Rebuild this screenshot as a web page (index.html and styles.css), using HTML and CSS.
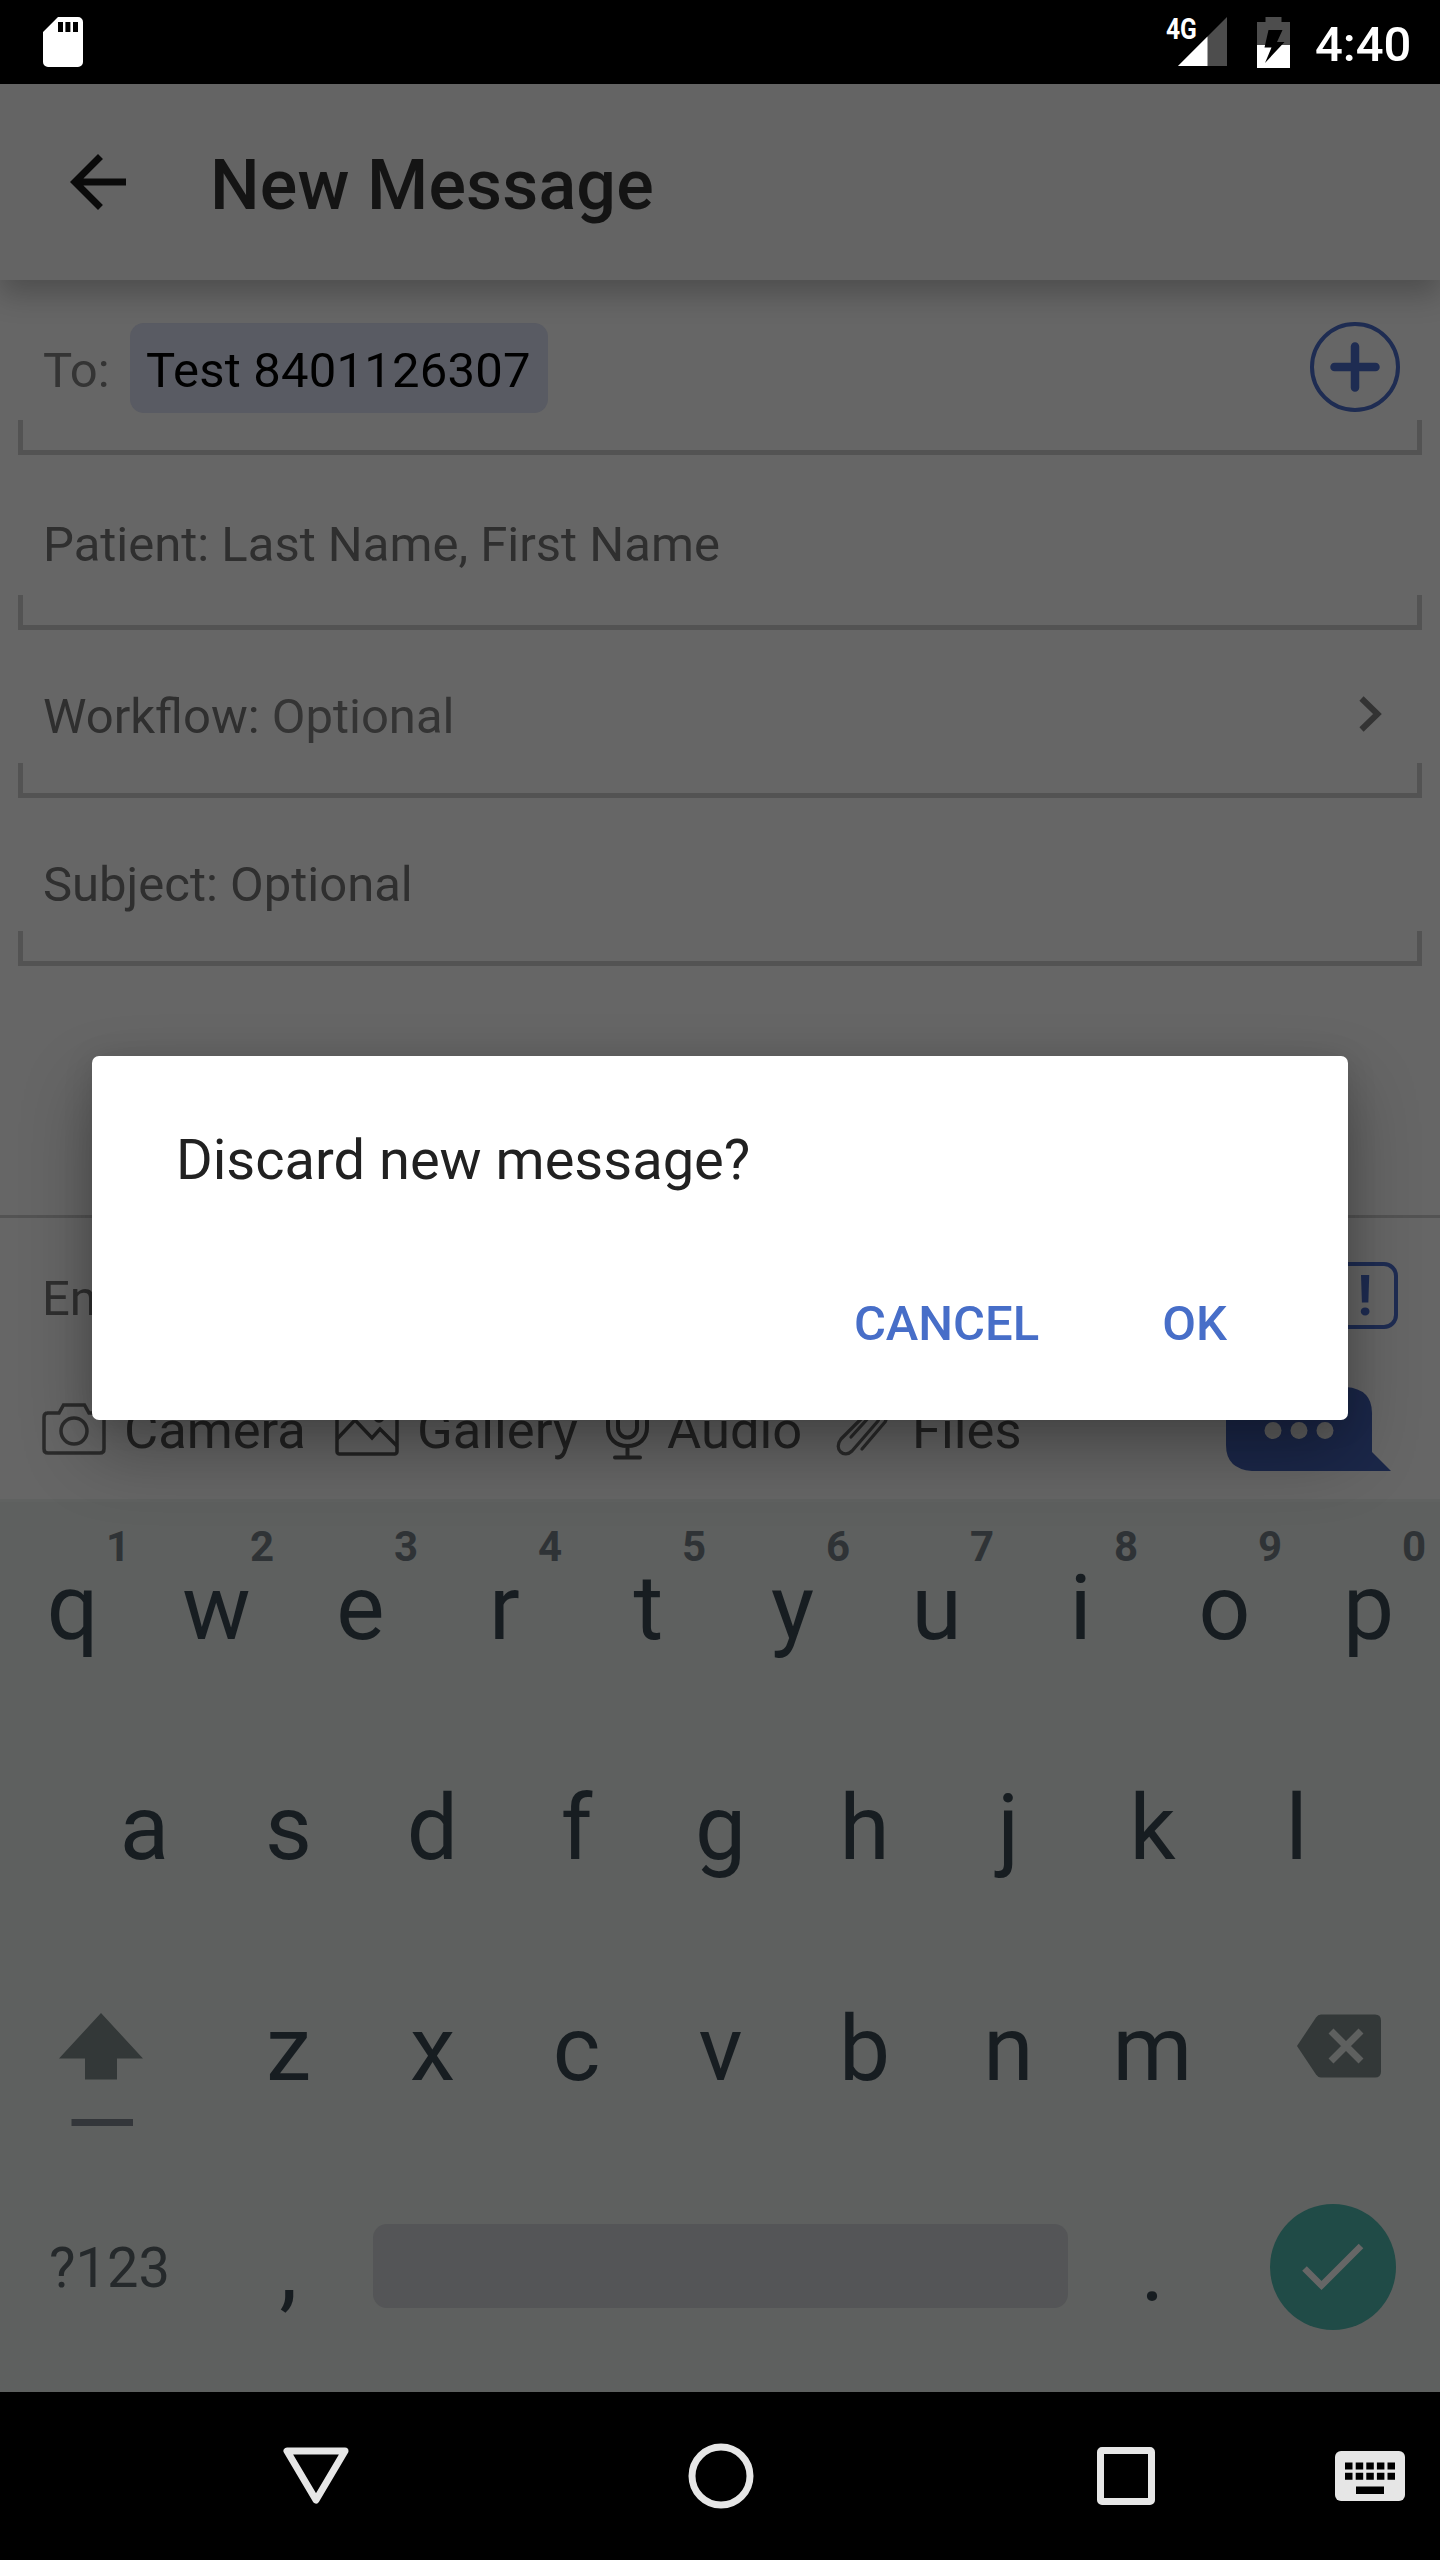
FILE: index.html
```html
<!DOCTYPE html>
<html lang="en">
<head>
<meta charset="utf-8">
<title>New Message</title>
<link rel="stylesheet" href="styles.css">
</head>
<body>
<div class="screen">
  <header class="status">
    <svg class="sd" width="40" height="50" viewBox="0 0 40 50"><path fill="#fff" fill-rule="evenodd" d="M15 0H35a5 5 0 0 1 5 5V45a5 5 0 0 1-5 5H5a5 5 0 0 1-5-5V15ZM15 5V15H20V5ZM22.400 5V15H27.400V5ZM30 5V15H35V5Z"/></svg>
    <div class="network">
      <span class="net-type">4G</span>
      <svg width="49" height="49" viewBox="0 0 49 49"><path fill="#4d4d4d" d="M0 49 49 0V49Z"/><path fill="#fff" d="M0 49 29.500 19.500V49Z"/></svg>
    </div>
    <svg class="battery" width="33" height="51" viewBox="0 0 33 51"><path fill="#4d4d4d" d="M8.500 0H24.500V5H33V28H0V5H8.500Z"/><path fill="#fff" d="M0 28H33V51H0Z"/><path fill="#000" d="M11.500 13H25.500L20 25H27.500L8 46L14.500 30.500H7.500Z"/></svg>
    <span class="clock">4:40</span>
  </header>

  <div class="appbar">
    <svg width="84" height="84" viewBox="0 0 24 24"><path fill="#0a0a0a" d="M20 11H7.830l5.590-5.590L12 4l-8 8 8 8 1.410-1.410L7.830 13H20v-2z"/></svg>
    <h1>New Message</h1>
  </div>

  <main class="form">
    <div class="field to">
      <div class="line"><span class="label">To:</span><span class="chip">Test 8401126307</span>
        <svg class="add" width="92" height="92" viewBox="0 0 92 92" fill="none" stroke="#1e2c52"><circle cx="46" cy="46" r="43" stroke-width="4"/><path d="M25.500 46H66.500M46 25.500V66.500" stroke-width="8.500" stroke-linecap="round"/></svg>
      </div>
      <div class="bracket"></div>
    </div>
    <div class="field patient"><div class="line">Patient: Last Name, First Name</div><div class="bracket"></div></div>
    <div class="field"><div class="line">Workflow: <span class="opt">Optional</span>
      <svg class="chev" width="24" height="36" viewBox="0 0 24 36" fill="none" stroke="#333" stroke-width="6"><path d="M2.500 2.500 18.500 18 2.500 33.500"/></svg></div><div class="bracket"></div></div>
    <div class="field"><div class="line">Subject: Optional</div><div class="bracket"></div></div>
  </main>

  <section class="composer">
    <div class="entry"><span>En</span><span class="urgent">!</span></div>
    <div class="tools">
      <div class="tool camera"><svg width="64" height="52" viewBox="0 0 64 52" fill="none" stroke="#2b2b2b" stroke-width="3.500"><path d="M5 10H17L21.500 2H42.500L47 10H58Q62 10 62 14V46Q62 50 58 50H6Q2 50 2 46V14Q2 10 6 10"/><ellipse cx="32" cy="28" rx="13" ry="13"/></svg><span>Camera</span></div>
      <div class="tool gallery"><svg width="64" height="54" viewBox="0 0 64 54" fill="none" stroke="#232323" stroke-width="3.500"><rect x="2" y="2" width="60" height="50" rx="2.500"/><path d="M2 37 20 18 37 36 45 27 62 44"/><circle cx="44" cy="15" r="4"/></svg><span>Gallery</span></div>
      <div class="tool audio"><svg width="43" height="62" viewBox="0 0 43 62" fill="none" stroke="#232323" stroke-width="4" stroke-linecap="round"><path d="M12 12a9.500 9.500 0 0 1 19 0V30a9.500 9.500 0 0 1-19 0ZM2 19V29C2 41 10 48 21.500 48S41 41 41 29V19M21.500 48V59M9 59.500H34"/></svg><span>Audio</span></div>
      <div class="tool files"><svg width="54" height="56" viewBox="0 0 54 56" fill="none" stroke="#2b2b2b" stroke-width="3.200" stroke-linecap="round" stroke-linejoin="round"><path d="M26 48 49 21C57 9 45 -3 35 8L5 38C-3 48 8 58 16 50L42 20C46 13 40 9 35 14L15 36"/></svg><span>Files</span></div>
      <svg class="send" width="166" height="84" viewBox="0 0 166 84"><path fill="#1b2749" d="M26 0H120Q146 2 146 26V65L165 84H26Q0 82 0 58V26Q2 2 26 0Z"/><g fill="#616161"><circle cx="47" cy="43.500" r="8.500"/><circle cx="73" cy="43.500" r="8.500"/><circle cx="99" cy="43.500" r="8.500"/></g></svg>
    </div>
  </section>

  <section class="keyboard">
    <div class="keys first">
      <span class="key">q<sup>1</sup></span><span class="key">w<sup>2</sup></span><span class="key">e<sup>3</sup></span><span class="key">r<sup>4</sup></span><span class="key">t<sup>5</sup></span><span class="key">y<sup>6</sup></span><span class="key">u<sup>7</sup></span><span class="key">i<sup>8</sup></span><span class="key">o<sup>9</sup></span><span class="key">p<sup>0</sup></span>
    </div>
    <div class="keys">
      <span class="key">a</span><span class="key">s</span><span class="key">d</span><span class="key">f</span><span class="key">g</span><span class="key">h</span><span class="key">j</span><span class="key">k</span><span class="key">l</span>
    </div>
    <div class="keys third">
      <span class="key wide shift"><svg width="84" height="114" viewBox="0 0 84 114"><path fill="#333838" d="M42 0 84 45.500H58V66.500H26V45.500H0Z"/><path fill="#33363a" d="M12.500 106H74V113H12.500Z"/></svg></span>
      <span class="key">z</span><span class="key">x</span><span class="key">c</span><span class="key">v</span><span class="key">b</span><span class="key">n</span><span class="key">m</span>
      <span class="key wide del"><svg width="84" height="64" viewBox="0 0 84 64"><path fill="#333838" d="M24 .5H78Q84 .5 84 6.500V57.500Q84 63.500 78 63.500H24Q21 63.500 19 60.500L0 32 19 3.500Q21 .5 24 .5Z"/><path stroke="#5e605f" stroke-width="7" d="M34 17 64 47M64 17 34 47"/></svg></span>
    </div>
    <div class="keys fourth">
      <span class="key wide sym">?123</span><span class="key">,</span><span class="space"></span><span class="key">.</span>
      <span class="key wide enter"><svg width="126" height="126" viewBox="0 0 126 126" fill="none"><circle cx="63" cy="63" r="63" fill="#204b47"/><path stroke="#666" stroke-width="6.500" d="M34.500 64.500 51.500 81.500 91 42"/></svg></span>
    </div>
  </section>

  <nav class="navbar">
    <svg width="66" height="58" viewBox="0 0 66 58" fill="none" stroke="#e6e6e6" stroke-width="7" stroke-linejoin="round"><path d="M4 4H62L33 53Z"/></svg>
    <svg width="66" height="66" viewBox="0 0 66 66" fill="none" stroke="#e6e6e6" stroke-width="7"><circle cx="33" cy="33" r="29"/></svg>
    <svg width="58" height="58" viewBox="0 0 58 58" fill="none" stroke="#e6e6e6" stroke-width="7"><rect x="3.500" y="3.500" width="51" height="51" rx="1.500"/></svg>
    <svg class="ime" width="70" height="50" viewBox="0 0 70 50"><rect width="70" height="50" rx="6" fill="#e6e6e6"/><g fill="#000"><path d="M10 11.500h7.500v7h-7.500zM20.700 11.500h7.500v7h-7.500zM31.300 11.500h7.500v7h-7.500zM41.900 11.500h7.500v7h-7.500zM52.500 11.500h7.500v7h-7.500z"/><path d="M10 21.700h7.500v7h-7.500zM20.700 21.700h7.500v7h-7.500zM31.300 21.700h7.500v7h-7.500zM41.900 21.700h7.500v7h-7.500zM52.500 21.700h7.500v7h-7.500zM21 35.500h28v7.500h-28z"/></g></svg>
  </nav>

  <div class="dialog" role="dialog">
    <p>Discard new message?</p>
    <div class="actions"><button>CANCEL</button><button>OK</button></div>
  </div>
</div>
</body>
</html>
```
FILE: styles.css
```css
* { box-sizing: border-box; }
body { margin: 0; background: #000; }
svg { display: block; flex: none; }
.screen {
  position: relative;
  display: flex;
  flex-direction: column;
  width: 1440px;
  height: 2560px;
  overflow: hidden;
  background: #666;
  font-family: Roboto, "Noto Sans", sans-serif;
  font-size: 49px;
  line-height: 58px;
  color: #2f2f2f;
}

/* status bar */
.status {
  display: flex;
  align-items: center;
  height: 84px;
  padding-left: 43px;
  background: #000;
  color: #fff;
}
.sd { margin-right: auto; }
.network { display: flex; width: 61px; }
.network svg { margin-left: -17px; margin-top: -1px; }
.net-type {
  width: 29px;
  height: 30px;
  margin-top: -6px;
  font-size: 30px;
  font-weight: 700;
  line-height: 34px;
  transform: scaleX(.82);
  transform-origin: 0 0;
}
.battery { margin-left: 30px; }
.clock { width: 125px; margin: 5px 0 0 25px; font-weight: 500; white-space: nowrap; }

/* app bar */
.appbar {
  position: relative;
  display: flex;
  align-items: center;
  height: 196px;
  padding-left: 56px;
  background: #646464;
  box-shadow: 0 14px 28px rgba(0, 0, 0, .24);
}
.appbar h1 {
  margin: 6px 0 0 70px;
  font-size: 70px;
  font-weight: 500;
  line-height: 84px;
  letter-spacing: .15px;
  color: #141414;
}

/* form */
.form { height: 935px; }
.line {
  display: flex;
  align-items: flex-end;
  height: 133px;
  padding: 0 42px 17px 43px;
  white-space: pre;
}
.to .line { height: 140px; padding-bottom: 7px; }
.patient .line { height: 140px; padding-bottom: 21px; }
.label { width: 87px; margin-bottom: 13px; color: #343434; }
.chip {
  width: 418px;
  height: 90px;
  padding: 19px 0 0 16px;
  border-radius: 14px;
  background: #595b63;
  letter-spacing: .2px;
  color: #000;
}
.add { margin: 0 -3px 0 auto; }
.opt { color: #343434; }
.chev { margin: 0 15px 14px auto; }
.bracket {
  height: 35px;
  margin: 0 18px;
  border: solid #535353;
  border-width: 0 5px 5px;
}

/* composer */
.composer { height: 284px; border-top: 3px solid #535353; }
.entry {
  display: flex;
  align-items: center;
  justify-content: space-between;
  height: 155px;
  padding: 0 42px;
}
.entry span:first-child { margin-top: 6px; }
.urgent {
  width: 68px;
  height: 67px;
  padding-left: 2px;
  border: 4px solid #1e2c52;
  border-radius: 14px;
  font-size: 55px;
  font-weight: 700;
  line-height: 60px;
  text-align: center;
  color: #1e2c52;
}
.tools {
  display: grid;
  grid-template-columns: 293px 271px 230px 390px 1fr;
  align-items: center;
  height: 112px;
  padding-left: 42px;
  font-size: 52.5px;
  color: #232323;
}
.tool { display: flex; align-items: center; }
.tool span { padding-top: 2px; }
.camera { gap: 18px; }
.gallery { gap: 18px; }
.audio { gap: 18px; }
.files { gap: 22px; }
.audio svg { margin-top: -1px; }

/* keyboard */
.keyboard {
  height: 893px;
  border-top: 3px solid #606261;
  background: #5e605f;
  font-size: 91px;
  color: #171d21;
}
.keys { display: flex; justify-content: center; align-items: flex-end; height: 220.5px; }
.keys.first { height: 215.5px; }
.key {
  position: relative;
  display: flex;
  align-items: center;
  justify-content: center;
  flex: none;
  width: 144px;
  height: 220px;
  padding-left: 1px;
  line-height: 106px;
}
.key sup {
  position: absolute;
  top: 29px;
  right: 14px;
  font-size: 42px;
  font-weight: 700;
  line-height: 40px;
  color: #2f3336;
}
.wide { width: 216px; }
.shift { justify-content: flex-start; padding: 42px 0 0 59px; }
.del { justify-content: flex-end; padding: 0 59px 5px 0; }
.sym { justify-content: flex-start; padding: 0 0 3px 49px; font-size: 56px; color: #25292b; }
.space {
  width: 695px;
  height: 84px;
  margin: 0 12px 71px 13px;
  border-radius: 14px;
  background: #545557;
}
.enter { justify-content: flex-end; padding: 0 44px 4px 0; }

/* navigation */
.navbar {
  display: grid;
  grid-template-columns: 404.5px 409px 238.5px 1fr;
  align-items: center;
  height: 168px;
  padding-left: 283px;
  background: #000;
}

/* dialog */
.dialog {
  position: absolute;
  top: 1056px;
  left: 92px;
  width: 1256px;
  height: 364px;
  padding: 69px 95px 0 84px;
  border-radius: 7px;
  background: #fff;
  box-shadow: 0 32px 70px rgba(0, 0, 0, .3), 0 4px 30px rgba(0, 0, 0, .12);
}
.dialog p { margin: 0; font-size: 56px; line-height: 70px; color: #212121; }
.actions { display: flex; justify-content: flex-end; gap: 71px; margin-top: 100px; }
.actions button {
  padding: 0 26px;
  border: 0;
  background: none;
  font: 500 49px/58px Roboto, sans-serif;
  color: #476ec8;
}
```
